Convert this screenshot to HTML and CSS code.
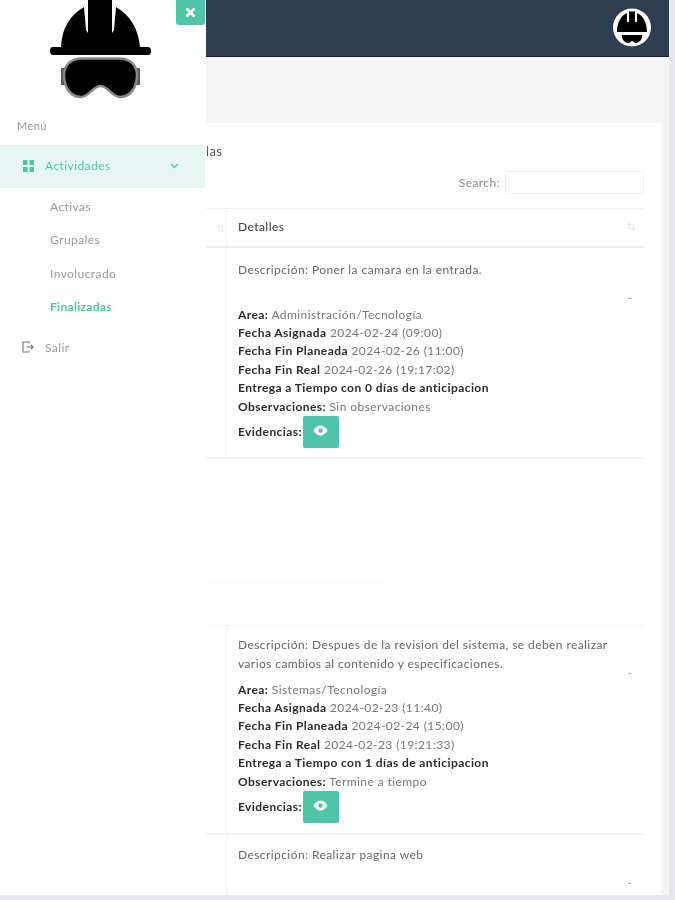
FILE: index.html
```html
<!DOCTYPE html>
<html lang="es">
<head>
<meta charset="utf-8">
<title>Actividades Finalizadas</title>
<link rel="stylesheet" href="styles.css">
</head>
<body>
<div class="page">
  <aside class="sidebar">
    <button class="close" aria-label="Cerrar">
      <svg width="11" height="11" viewBox="0 0 11 11"><path d="M1.5 1.5l8 8M9.5 1.5l-8 8" stroke="#fff" stroke-width="2.6" fill="none"/></svg>
    </button>
    <div class="logo">
      <svg width="101" height="100" viewBox="0 0 101 100">
        <path d="M11 47C12 28 20 15 34 7L36 30 38 33V0H62V33L64 30 66 7C80 15 88 28 90 47H98Q101 47 101 51 101 55 98 55H3Q0 55 0 51 0 47 3 47Z" fill="#000"/>
        <rect x="11" y="68" width="5" height="17" rx="1" fill="#555"/>
        <rect x="85" y="68" width="5" height="17" rx="1" fill="#555"/>
        <path d="M32 58.500H69C81 58.500 87 66 87 75 87 88 80 97 70 97 62 97 58 86 50.500 86 43 86 39 97 31 97 21 97 14 88 14 75 14 66 20 58.500 32 58.500Z" fill="#000" stroke="#8a8a8a" stroke-width="2.500"/>
      </svg>
    </div>
    <div class="menu-label">Menú</div>
    <div class="menu-item active">
      <svg class="menu-icon" width="11" height="12" viewBox="0 0 11 12" fill="#4cc7a5"><rect width="4.500" height="5"/><rect x="6.500" width="4.500" height="5"/><rect y="7" width="4.500" height="5"/><rect x="6.500" y="7" width="4.500" height="5"/></svg>
      <span class="menu-text">Actividades</span>
      <svg class="chevron" width="9" height="6" viewBox="0 0 9 6"><path d="M1 1l3.500 3.500L8 1" fill="none" stroke="#4cc7a5" stroke-width="1.400"/></svg>
    </div>
    <nav class="submenu">
      <a class="sub">Activas</a>
      <a class="sub">Grupales</a>
      <a class="sub">Involucrado</a>
      <a class="sub current">Finalizadas</a>
    </nav>
    <div class="menu-item logout">
      <svg class="menu-icon" width="12" height="12" viewBox="0 0 12 12" fill="none" stroke="#777" stroke-width="1.100"><path d="M7 2.500V1H1v10h6V9.500M4.500 6H11M9 4l2 2-2 2"/></svg>
      <span class="menu-text">Salir</span>
    </div>
  </aside>

  <main class="main">
    <header class="topbar">
      <svg class="avatar" width="40" height="40" viewBox="0 0 40 40">
        <circle cx="20" cy="19.500" r="19" fill="#fff"/>
        <path d="M5 24C5 13 10 7 15 5V14H17V3.500H23V14H25V5C30 7 35 13 35 24Z" fill="#000"/>
        <path d="M10 27H30C31 31 27 35 24 35 22 35 21 33 20 33 19 33 18 35 16 35 13 35 9 31 10 27Z" fill="#000"/>
      </svg>
    </header>
    <div class="band"></div>
    <section class="card">
      <h2 class="title">las</h2>
      <div class="search">
        <label class="search-label">Search:</label>
        <div class="search-input"></div>
      </div>
      <div class="thead">
        <div class="th-first"><span class="sort">↑↓</span></div>
        <div class="th-main">Detalles<span class="sort">↑↓</span></div>
      </div>

      <div class="row row-a">
        <div class="cell-first"></div>
        <div class="cell">
          <div class="body">
            <p class="desc">Descripción: Poner la camara en la entrada.</p>
            <p class="line"><b>Area:</b> Administración/Tecnología</p>
            <p class="line"><b>Fecha Asignada</b> 2024-02-24 (09:00)</p>
            <p class="line"><b>Fecha Fin Planeada</b> 2024-02-26 (11:00)</p>
            <p class="line"><b>Fecha Fin Real</b> 2024-02-26 (19:17:02)</p>
            <p class="line"><b>Entrega a Tiempo con 0 días de anticipacion</b></p>
            <p class="line"><b>Observaciones:</b> Sin observaciones</p>
            <div class="evid"><b>Evidencias:</b>
              <button class="eye" aria-label="Ver"><svg width="15" height="11" viewBox="0 0 15 11"><path d="M0.500 5.500C2.500 2 5 0.500 7.500 0.500S12.500 2 14.500 5.500C12.500 9 10 10.500 7.500 10.500S2.500 9 0.500 5.500Z" fill="#fff"/><circle cx="7.500" cy="5.500" r="2.200" fill="#4fc4a8"/></svg></button>
            </div>
          </div>
          <span class="dash"></span>
        </div>
      </div>

      <div class="gap"><div class="gap-line"></div></div>

      <div class="row row-b">
        <div class="cell-first"></div>
        <div class="cell">
          <div class="body">
            <p class="desc">Descripción: Despues de la revision del sistema, se deben realizar varios cambios al contenido y especificaciones.</p>
            <p class="line"><b>Area:</b> Sistemas/Tecnología</p>
            <p class="line"><b>Fecha Asignada</b> 2024-02-23 (11:40)</p>
            <p class="line"><b>Fecha Fin Planeada</b> 2024-02-24 (15:00)</p>
            <p class="line"><b>Fecha Fin Real</b> 2024-02-23 (19:21:33)</p>
            <p class="line"><b>Entrega a Tiempo con 1 días de anticipacion</b></p>
            <p class="line"><b>Observaciones:</b> Termine a tiempo</p>
            <div class="evid"><b>Evidencias:</b>
              <button class="eye" aria-label="Ver"><svg width="15" height="11" viewBox="0 0 15 11"><path d="M0.500 5.500C2.500 2 5 0.500 7.500 0.500S12.500 2 14.500 5.500C12.500 9 10 10.500 7.500 10.500S2.500 9 0.500 5.500Z" fill="#fff"/><circle cx="7.500" cy="5.500" r="2.200" fill="#4fc4a8"/></svg></button>
            </div>
          </div>
          <span class="dash"></span>
        </div>
      </div>

      <div class="row row-c">
        <div class="cell-first"></div>
        <div class="cell">
          <div class="body">
            <p class="desc">Descripción: Realizar pagina web</p>
            <p class="line"><b>Area:</b> Sistemas/Tecnología</p>
          </div>
          <span class="dash"></span>
        </div>
      </div>
    </section>
  </main>
</div>
</body>
</html>
```

FILE: styles.css
```css
* { box-sizing: border-box; }
html, body { margin: 0; height: 100%; overflow: hidden; }
body {
  background: #e6eaef;
  font-family: "Lato", "Noto Sans", sans-serif;
  font-size: 12px;
  letter-spacing: 0.42px;
  color: #666;
}
.page {
  display: flex;
  width: 669px;
  height: 895px;
  overflow: hidden;
  background: #f5f5f5;
  filter: blur(0.6px);
}
.sidebar {
  position: relative;
  flex: 0 0 206px;
  background: #fff;
}
.close {
  position: absolute;
  top: 0;
  right: 1px;
  width: 29px;
  height: 25px;
  padding: 0;
  border: 0;
  border-radius: 0 0 3px 3px;
  background: #4fc4a8;
  display: flex;
  align-items: center;
  justify-content: center;
}
.logo { height: 118px; padding: 0 0 0 50px; }
.logo svg { display: block; }
.menu-label { padding-left: 17px; height: 27px; line-height: 16px; color: #999; font-size: 11px; }
.menu-item {
  display: flex;
  align-items: center;
  height: 43px;
  padding: 0 0 2px 23px;
  margin-right: 1px;
}
.menu-item.active { background: #e6f7f3; color: #4cc7a5; }
.menu-text { margin-left: 11px; flex: 1; }
.chevron { margin-right: 26px; }
.submenu { display: flex; flex-direction: column; padding-top: 2px; }
.sub {
  height: 33.300px;
  line-height: 33px;
  padding-left: 50px;
  color: #999;
}
.sub.current { color: #4cc7a5; font-weight: 700; letter-spacing: 0.3px; }
.logout { color: #999; height: 48px; padding: 0 0 0 22px; }
.logout .menu-text { margin-left: 11px; }

.main { flex: 1; display: flex; flex-direction: column; min-width: 0; }
.topbar {
  height: 57px;
  background: #2c3e50;
  border-bottom: 1px solid #16222f;
  display: flex;
  align-items: center;
  justify-content: flex-end;
  padding-right: 17px;
}
.avatar { display: block; }
.band { height: 66px; }
.card { width: 455px; flex: 1; background: #fff; overflow: hidden; color: #666; }
.title { margin: 0; height: 42px; padding-top: 19px; font-size: 13px; line-height: 18px; font-weight: 400; color: #555; }
.search { display: flex; justify-content: flex-end; align-items: center; height: 43px; padding: 0 17px 9px 0; gap: 5px; color: #888; }
.search-input { width: 139px; height: 23px; border: 1px solid #eee; border-radius: 2px; }
.thead {
  display: flex;
  width: 438px;
  height: 40px;
  border-top: 1px solid #f0f0f0;
  border-bottom: 2px solid #eee;
}
.th-first { flex: 0 0 21px; border-right: 1px solid #f2f2f2; display: flex; align-items: center; justify-content: flex-end; }
.th-main { flex: 1; display: flex; align-items: center; justify-content: space-between; padding: 0 7px 3px 11px; color: #444; font-weight: 500; }
.sort { font-size: 8px; color: #ddd; letter-spacing: -2px; padding-right: 3px; }
.row { display: flex; width: 438px; border-bottom: 2px solid #f2f2f2; }
.cell-first { flex: 0 0 21px; border-right: 1px solid #f4f4f4; }
.cell { flex: 1; display: flex; padding: 11px 13px 0 11px; }
.row-a .cell { padding-top: 13px; height: 209px; }
.gap { height: 166px; padding-top: 123px; }
.gap-line { width: 180px; height: 1px; background: #f3f3f3; }
.row-b { border-top: 1px solid #f2f2f2; }
.row-b .cell { padding-top: 10px; height: 207px; }
.row-c .cell { height: 80px; }
.body { flex: 1; min-width: 0; }
.body p { margin: 0; }
.line { line-height: 18.400px; white-space: nowrap; color: #777; }
.line b, .evid b { color: #2b2b2b; font-weight: 700; letter-spacing: 0.42px; }
.desc { min-height: 37px; line-height: 18.500px; margin-bottom: 7.500px !important; color: #666; }
.evid { display: flex; align-items: center; gap: 1px; }
.eye {
  width: 36px;
  height: 32px;
  padding: 0 0 3px;
  border: 0;
  border-radius: 2px;
  background: #4fc4a8;
  display: flex;
  align-items: center;
  justify-content: center;
}
.dash { flex: 0 0 3px; height: 1px; margin-top: 37px; background: #aaa; }
```
